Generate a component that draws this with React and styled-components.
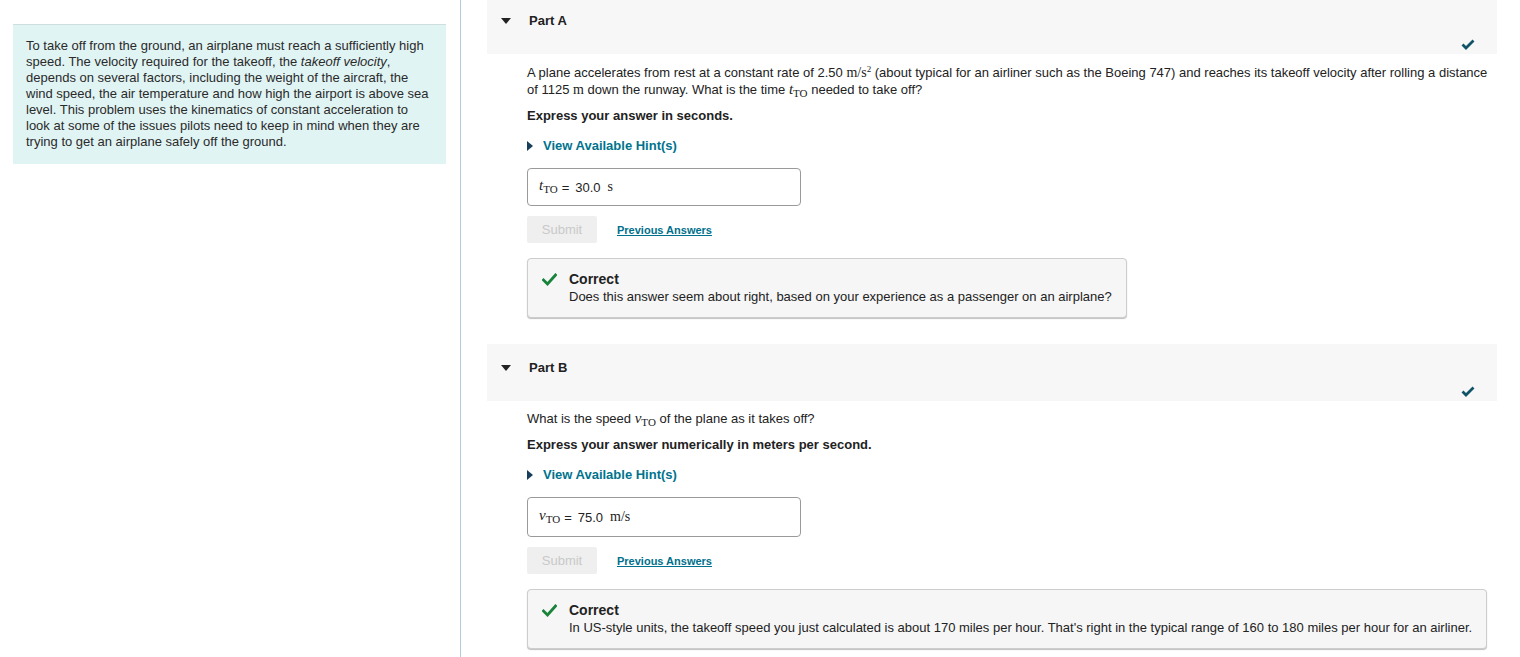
import React from "react";
import styled, { createGlobalStyle } from "styled-components";

const GlobalStyle = createGlobalStyle`
  body {
    margin: 0;
    background: #ffffff;
    font-family: "Liberation Sans", Arial, sans-serif;
    color: #222222;
  }
`;

const Page = styled.div`
  display: flex;
  width: 1520px;
  height: 657px;
  overflow: hidden;
`;

const Intro = styled.aside`
  width: 461px;
  flex-shrink: 0;
  box-sizing: border-box;
  padding: 24px 14px 0 13px;
  border-right: 1px solid #b3cddc;
`;

const IntroBox = styled.div`
  background: #e1f4f4;
  border-top: 1px solid #cfdede;
  padding: 13px 13px 14px 13px;
  font-size: 13px;
  line-height: 16px;
  color: #2a2a2a;
`;

const Parts = styled.main`
  flex: 1;
  padding: 0 20px 0 26px;
  margin-top: -3px;
`;

const Part = styled.section`
  margin-bottom: 26px;
`;

const PartHeader = styled.div`
  position: relative;
  height: 57px;
  background: #f7f7f7;
  display: flex;
  align-items: flex-start;
  padding: 16px 0 0 14px;
  box-sizing: border-box;
  width: 1010px;
`;

const Caret = styled.span`
  width: 0;
  height: 0;
  border-left: 5px solid transparent;
  border-right: 5px solid transparent;
  border-top: 6px solid #222;
  margin: 5px 18px 0 0;
`;

const PartTitle = styled.h2`
  margin: 0;
  font-size: 13px;
  font-weight: bold;
  line-height: 16px;
  color: #222;
`;

const DoneMark = styled.svg`
  position: absolute;
  right: 22px;
  bottom: 4px;
`;

const Body = styled.div`
  padding: 0 0 0 40px;
  width: 970px;
`;

const Question = styled.p`
  margin: ${(p) => p.$top}px 0 0 0;
  font-size: 13px;
  line-height: 17px;
  color: #222;
`;

const Instruction = styled.p`
  margin: 9px 0 0 0;
  font-size: 13px;
  font-weight: bold;
  line-height: 17px;
  color: #222;
`;

const Hint = styled.div`
  display: flex;
  align-items: center;
  margin-top: 13px;
  font-size: 13px;
  font-weight: bold;
  line-height: 17px;
  color: #00738e;
`;

const HintArrow = styled.span`
  width: 0;
  height: 0;
  border-top: 5px solid transparent;
  border-bottom: 5px solid transparent;
  border-left: 6px solid #173f5c;
  margin: 0 10px 0 0;
`;

const AnswerBox = styled.div`
  margin-top: 14px;
  width: 274px;
  height: ${(p) => p.$h}px;
  box-sizing: border-box;
  border: 1px solid #9a9a9a;
  border-radius: 4px;
  display: flex;
  align-items: center;
  padding: 0 11px;
  font-size: 13px;
  color: #222;
`;

const MathVar = styled.span`
  font-family: "Liberation Serif", "DejaVu Serif", serif;
  font-style: italic;
  font-size: 15px;
  line-height: 0;
`;

const MathSub = styled.sub`
  font-family: "Liberation Serif", "DejaVu Serif", serif;
  font-style: normal;
  font-size: 11px;
  line-height: 0;
  vertical-align: -3px;
`;

const MathSup = styled.sup`
  font-size: 9px;
  line-height: 0;
  vertical-align: 5px;
`;

const MathUnit = styled.span`
  font-family: "Liberation Serif", "DejaVu Serif", serif;
  font-size: 14px;
  line-height: 0;
`;

const Equals = styled.span`
  margin: 0 6px 0 4px;
`;

const Actions = styled.div`
  display: flex;
  align-items: center;
  gap: 20px;
  margin-top: 10px;
`;

const SubmitButton = styled.button`
  height: 27px;
  width: 70px;
  border: none;
  border-radius: 2px;
  background: #efefef;
  color: #c9c9c9;
  font-family: "Liberation Sans", Arial, sans-serif;
  font-size: 13px;
  padding: 0;
`;

const PrevLink = styled.a`
  font-size: 11px;
  font-weight: bold;
  color: #00708c;
  text-decoration: underline;
`;

const Feedback = styled.div`
  margin-top: 15px;
  display: inline-flex;
  align-items: flex-start;
  gap: 12px;
  background: #f6f6f6;
  border: 1px solid #cdcdcd;
  border-radius: 4px;
  box-shadow: 0 1px 1px rgba(0, 0, 0, 0.25);
  padding: 12px 14px 12px 14px;
  font-size: 13px;
  line-height: 17px;
  color: #222;
`;

const FeedbackTitle = styled.div`
  font-weight: bold;
  font-size: 14px;
`;

const GreenCheck = () => (
  <svg width="15" height="13" viewBox="0 0 15 13" style={{ marginTop: 2 }}>
    <path d="M1.5 7 L5.5 11 L13.5 2" fill="none" stroke="#19833a" strokeWidth="2.8" strokeLinecap="square" />
  </svg>
);

const HeaderCheck = () => (
  <DoneMark width="14" height="12" viewBox="0 0 14 12">
    <path d="M1.5 6.5 L5 10 L12.5 2.5" fill="none" stroke="#11546a" strokeWidth="2.8" />
  </DoneMark>
);

function PartBlock({ title, question, top, instruction, symbol, value, unit, boxH, feedback }) {
  return (
    <Part>
      <PartHeader>
        <Caret />
        <PartTitle>{title}</PartTitle>
        <HeaderCheck />
      </PartHeader>
      <Body>
        <Question $top={top}>{question}</Question>
        <Instruction>{instruction}</Instruction>
        <Hint>
          <HintArrow />
          View Available Hint(s)
        </Hint>
        <AnswerBox $h={boxH}>
          <MathVar>
            {symbol}
            <MathSub>TO</MathSub>
          </MathVar>
          <Equals>=</Equals>
          {value}
          <MathUnit style={{ marginLeft: 7 }}>{unit}</MathUnit>
        </AnswerBox>
        <Actions>
          <SubmitButton disabled>Submit</SubmitButton>
          <PrevLink href="#">Previous Answers</PrevLink>
        </Actions>
        <Feedback>
          <GreenCheck />
          <div>
            <FeedbackTitle>Correct</FeedbackTitle>
            {feedback}
          </div>
        </Feedback>
      </Body>
    </Part>
  );
}

export default function App() {
  return (
    <>
      <GlobalStyle />
      <Page>
        <Intro>
          <IntroBox>
            To take off from the ground, an airplane must reach a sufficiently high speed. The velocity required
            for the takeoff, the <i>takeoff velocity</i>, depends on several factors, including the weight of the
            aircraft, the wind speed, the air temperature and how high the airport is above sea level. This problem
            uses the kinematics of constant acceleration to look at some of the issues pilots need to keep in mind
            when they are trying to get an airplane safely off the ground.
          </IntroBox>
        </Intro>
        <Parts>
          <PartBlock
            title="Part A"
            top={10}
            question={
              <>
                A plane accelerates from rest at a constant rate of 2.50{" "}
                <MathUnit>
                  m/s<MathSup>2</MathSup>
                </MathUnit>{" "}
                (about typical for an airliner such as the Boeing 747) and reaches its takeoff velocity after rolling a
                distance of 1125 <MathUnit>m</MathUnit> down the runway. What is the time{" "}
                <MathVar>
                  t<MathSub>TO</MathSub>
                </MathVar>{" "}
                needed to take off?
              </>
            }
            instruction="Express your answer in seconds."
            symbol="t"
            value="30.0"
            unit="s"
            boxH={38}
            feedback="Does this answer seem about right, based on your experience as a passenger on an airplane?"
          />
          <PartBlock
            title="Part B"
            top={9}
            question={
              <>
                What is the speed{" "}
                <MathVar>
                  v<MathSub>TO</MathSub>
                </MathVar>{" "}
                of the plane as it takes off?
              </>
            }
            instruction="Express your answer numerically in meters per second."
            symbol="v"
            value="75.0"
            unit="m/s"
            boxH={40}
            feedback="In US-style units, the takeoff speed you just calculated is about 170 miles per hour. That's right in the typical range of 160 to 180 miles per hour for an airliner."
          />
        </Parts>
      </Page>
    </>
  );
}
